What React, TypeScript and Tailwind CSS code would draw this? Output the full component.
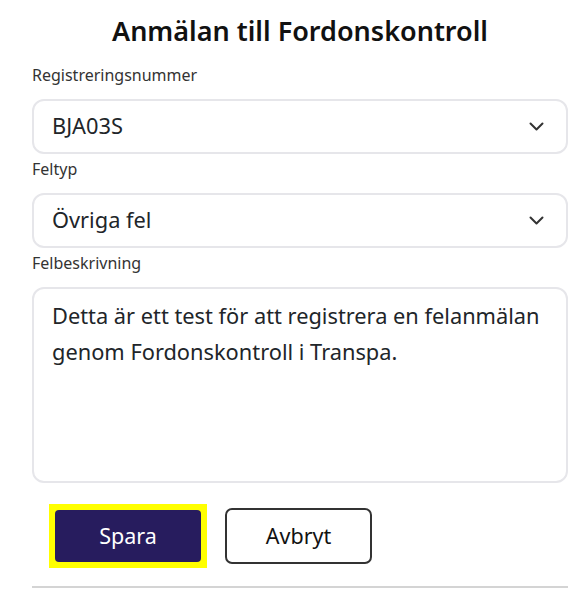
export default function App() {
  return (
    <div className="w-[580px] min-h-[606px] bg-white pl-8 pr-3 pt-[13px] font-['Noto_Sans',sans-serif] text-[#212529]">
      <h1 className="text-center text-[27px] leading-[36px] font-semibold text-[#111]">Anmälan till Fordonskontroll</h1>

      <div className="mt-[16px] flex flex-col">
        <label className="text-[16px] leading-[20px] text-[#333] mb-[14px]">Registreringsnummer</label>
        <SelectBox value="BJA03S" />

        <label className="mt-[5px] text-[16px] leading-[20px] text-[#333] mb-[14px]">Feltyp</label>
        <SelectBox value="Övriga fel" />

        <label className="mt-[5px] text-[16px] leading-[20px] text-[#333] mb-[14px]">Felbeskrivning</label>
        <textarea
          className="h-[196px] w-full resize-none rounded-[12px] border-2 border-[#e6e6ea] px-[18px] py-[9px] text-[21.8px] leading-[36px] text-[#212529] outline-none"
          defaultValue="Detta är ett test för att registrera en felanmälan genom Fordonskontroll i Transpa."
        />
      </div>

      <div className="mt-[21px] flex items-center gap-[18px] pl-[17px]">
        <div className="bg-[#ffff00] p-[6px]">
          <button className="h-[52px] w-[146px] rounded-[4px] bg-[#271c5e] text-[21.5px] text-white">Spara</button>
        </div>
        <button className="h-[56px] w-[147px] rounded-[7px] border-2 border-[#333] bg-white text-[21.5px] text-[#111]">Avbryt</button>
      </div>

      <div className="mt-[18px] h-[2px] bg-[#d4d4d4]" />
    </div>
  )
}

function SelectBox({ value }: { value: string }) {
  return (
    <div className="flex h-[55px] items-center justify-between rounded-[12px] border-2 border-[#e6e6ea] pl-[18px] pr-[22px]">
      <span className="text-[21.8px] text-[#212529]">{value}</span>
      <svg width="15" height="9" viewBox="0 0 15 9" fill="none" stroke="#333" strokeWidth="2" strokeLinecap="round" strokeLinejoin="round">
        <polyline points="1.5,1.5 7.5,7.5 13.5,1.5" />
      </svg>
    </div>
  )
}
